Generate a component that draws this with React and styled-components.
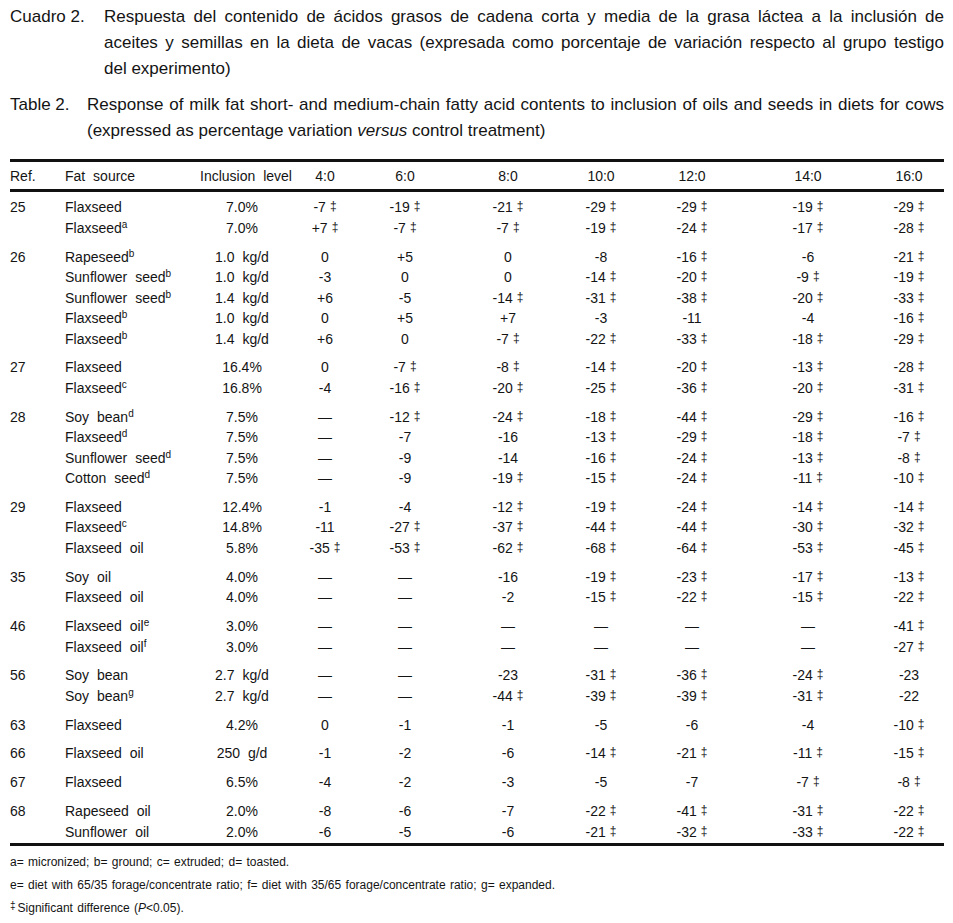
import React from "react";
import styled, { createGlobalStyle } from "styled-components";

const GlobalStyle = createGlobalStyle`
  html, body {
    margin: 0;
    padding: 0;
    background: #fff;
  }
  body {
    font-family: "Liberation Sans", Arial, sans-serif;
    color: #141414;
  }
`;

const Page = styled.div`
  width: 953px;
  box-sizing: border-box;
  padding: 4px 9px 0 10px;
`;

const Caption = styled.div`
  display: flex;
  font-size: 17px;
  line-height: 26px;
  margin-bottom: ${(p) => p.$gap || 0}px;
`;

const CaptionLabel = styled.div`
  flex: 0 0 ${(p) => p.$indent}px;
  white-space: nowrap;
`;

const CaptionText = styled.div`
  flex: 1;
`;

const CaptionLine = styled.div`
  text-align: ${(p) => (p.$justify ? "justify" : "left")};
  text-align-last: ${(p) => (p.$justify ? "justify" : "left")};
`;

const Table = styled.div`
  width: 934px;
  margin-top: 15px;
  border-top: 3px solid #111;
  border-bottom: 3px solid #111;
  font-size: 14px;
  word-spacing: 4px;
`;

const COLS = "55px 135px 84px 82px 78px 128px 58px 124px 108px 82px";

const HeadRow = styled.div`
  display: grid;
  grid-template-columns: ${COLS};
  height: 27px;
  align-items: center;
  border-bottom: 3px solid #111;
`;

const Body = styled.div`
  padding: 0 0 1.5px;
`;

const Group = styled.div`
  margin-top: ${(p) => (p.$first ? 5 : 8.3)}px;
`;

const Row = styled.div`
  display: grid;
  grid-template-columns: ${COLS};
  height: 20.5px;
  align-items: center;
  line-height: 20px;
`;

const Cell = styled.div`
  white-space: nowrap;
  text-align: ${(p) => p.$align || "center"};
  &:last-child {
    padding-left: 12px;
  }
`;

const Sup = styled.span`
  font-size: 10px;
  vertical-align: 5px;
  line-height: 0;
  word-spacing: 0;
`;

const Dag = styled.span`
  font-size: 12px;
  vertical-align: 2px;
  line-height: 0;
  margin-left: 4px;
`;

const Notes = styled.div`
  margin-top: 4.5px;
  font-size: 12px;
  line-height: 23px;
  word-spacing: 1px;
`;

const NoteDag = styled.span`
  font-size: 10px;
  vertical-align: 3px;
  line-height: 0;
  margin-right: 2px;
`;

const heads = ["Ref.", "Fat source", "Inclusion level", "4:0", "6:0", "8:0", "10:0", "12:0", "14:0", "16:0"];

// [ref, [[fuente, sup, nivel, ...valores]]]  "‡" al final = diferencia significativa
const data = [
  ["25", [
    ["Flaxseed", "", "7.0%", "-7‡", "-19‡", "-21‡", "-29‡", "-29‡", "-19‡", "-29‡"],
    ["Flaxseed", "a", "7.0%", "+7‡", "-7‡", "-7‡", "-19‡", "-24‡", "-17‡", "-28‡"],
  ]],
  ["26", [
    ["Rapeseed", "b", "1.0 kg/d", "0", "+5", "0", "-8", "-16‡", "-6", "-21‡"],
    ["Sunflower seed", "b", "1.0 kg/d", "-3", "0", "0", "-14‡", "-20‡", "-9‡", "-19‡"],
    ["Sunflower seed", "b", "1.4 kg/d", "+6", "-5", "-14‡", "-31‡", "-38‡", "-20‡", "-33‡"],
    ["Flaxseed", "b", "1.0 kg/d", "0", "+5", "+7", "-3", "-11", "-4", "-16‡"],
    ["Flaxseed", "b", "1.4 kg/d", "+6", "0", "-7‡", "-22‡", "-33‡", "-18‡", "-29‡"],
  ]],
  ["27", [
    ["Flaxseed", "", "16.4%", "0", "-7‡", "-8‡", "-14‡", "-20‡", "-13‡", "-28‡"],
    ["Flaxseed", "c", "16.8%", "-4", "-16‡", "-20‡", "-25‡", "-36‡", "-20‡", "-31‡"],
  ]],
  ["28", [
    ["Soy bean", "d", "7.5%", "—", "-12‡", "-24‡", "-18‡", "-44‡", "-29‡", "-16‡"],
    ["Flaxseed", "d", "7.5%", "—", "-7", "-16", "-13‡", "-29‡", "-18‡", "-7‡"],
    ["Sunflower seed", "d", "7.5%", "—", "-9", "-14", "-16‡", "-24‡", "-13‡", "-8‡"],
    ["Cotton seed", "d", "7.5%", "—", "-9", "-19‡", "-15‡", "-24‡", "-11‡", "-10‡"],
  ]],
  ["29", [
    ["Flaxseed", "", "12.4%", "-1", "-4", "-12‡", "-19‡", "-24‡", "-14‡", "-14‡"],
    ["Flaxseed", "c", "14.8%", "-11", "-27‡", "-37‡", "-44‡", "-44‡", "-30‡", "-32‡"],
    ["Flaxseed oil", "", "5.8%", "-35‡", "-53‡", "-62‡", "-68‡", "-64‡", "-53‡", "-45‡"],
  ]],
  ["35", [
    ["Soy oil", "", "4.0%", "—", "—", "-16", "-19‡", "-23‡", "-17‡", "-13‡"],
    ["Flaxseed oil", "", "4.0%", "—", "—", "-2", "-15‡", "-22‡", "-15‡", "-22‡"],
  ]],
  ["46", [
    ["Flaxseed oil", "e", "3.0%", "—", "—", "—", "—", "—", "—", "-41‡"],
    ["Flaxseed oil", "f", "3.0%", "—", "—", "—", "—", "—", "—", "-27‡"],
  ]],
  ["56", [
    ["Soy bean", "", "2.7 kg/d", "—", "—", "-23", "-31‡", "-36‡", "-24‡", "-23"],
    ["Soy bean", "g", "2.7 kg/d", "—", "—", "-44‡", "-39‡", "-39‡", "-31‡", "-22"],
  ]],
  ["63", [["Flaxseed", "", "4.2%", "0", "-1", "-1", "-5", "-6", "-4", "-10‡"]]],
  ["66", [["Flaxseed oil", "", "250 g/d", "-1", "-2", "-6", "-14‡", "-21‡", "-11‡", "-15‡"]]],
  ["67", [["Flaxseed", "", "6.5%", "-4", "-2", "-3", "-5", "-7", "-7‡", "-8‡"]]],
  ["68", [
    ["Rapeseed oil", "", "2.0%", "-8", "-6", "-7", "-22‡", "-41‡", "-31‡", "-22‡"],
    ["Sunflower oil", "", "2.0%", "-6", "-5", "-6", "-21‡", "-32‡", "-33‡", "-22‡"],
  ]],
];

const Value = ({ v }) => {
  const sig = v.endsWith("‡");
  return (
    <Cell>
      {sig ? v.slice(0, -1) : v}
      {sig && <Dag>‡</Dag>}
    </Cell>
  );
};

export default function App() {
  return (
    <>
      <GlobalStyle />
      <Page>
        <Caption $gap={10}>
          <CaptionLabel $indent={94}>Cuadro 2.</CaptionLabel>
          <CaptionText>
            <CaptionLine $justify>
              Respuesta del contenido de ácidos grasos de cadena corta y media de la grasa láctea a la inclusión de
            </CaptionLine>
            <CaptionLine $justify>
              aceites y semillas en la dieta de vacas (expresada como porcentaje de variación respecto al grupo testigo
            </CaptionLine>
            <CaptionLine>del experimento)</CaptionLine>
          </CaptionText>
        </Caption>
        <Caption>
          <CaptionLabel $indent={77}>Table 2.</CaptionLabel>
          <CaptionText>
            <CaptionLine $justify>
              Response of milk fat short- and medium-chain fatty acid contents to inclusion of oils and seeds in diets for cows
            </CaptionLine>
            <CaptionLine>
              (expressed as percentage variation <i>versus</i> control treatment)
            </CaptionLine>
          </CaptionText>
        </Caption>

        <Table>
          <HeadRow>
            {heads.map((h, i) => (
              <Cell key={h} $align={i < 2 ? "left" : "center"}>
                {h}
              </Cell>
            ))}
          </HeadRow>
          <Body>
            {data.map(([ref, rows], gi) => (
              <Group key={ref} $first={gi === 0}>
                {rows.map((r, ri) => (
                  <Row key={ri}>
                    <Cell $align="left">{ri === 0 ? ref : ""}</Cell>
                    <Cell $align="left">
                      {r[0]}
                      {r[1] && <Sup>{r[1]}</Sup>}
                    </Cell>
                    <Cell>{r[2]}</Cell>
                    {r.slice(3).map((v, vi) => (
                      <Value key={vi} v={v} />
                    ))}
                  </Row>
                ))}
              </Group>
            ))}
          </Body>
        </Table>

        <Notes>
          <div>a= micronized; b= ground; c= extruded; d= toasted.</div>
          <div>
            e= diet with 65/35 forage/concentrate ratio; f= diet with 35/65 forage/concentrate ratio; g= expanded.
          </div>
          <div>
            <NoteDag>‡</NoteDag>Significant difference (<i>P</i>&lt;0.05).
          </div>
        </Notes>
      </Page>
    </>
  );
}
